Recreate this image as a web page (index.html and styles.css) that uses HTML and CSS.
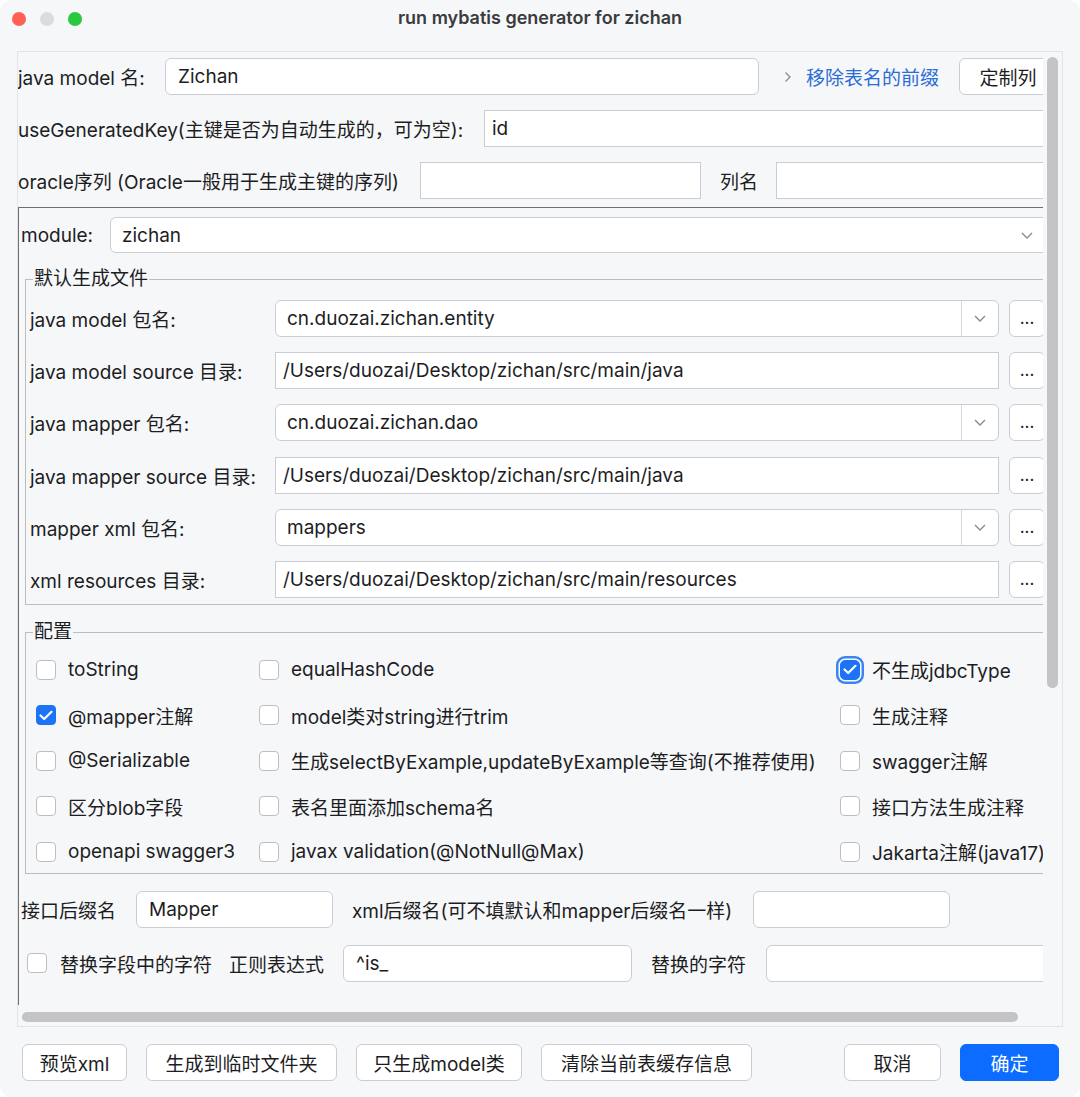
FILE: index.html
```html
<!DOCTYPE html>
<html lang="zh">
<head>
    <meta charset="UTF-8">
    <title>run mybatis generator for zichan</title>
    <link rel="stylesheet" href="styles.css">
</head>
<body>
<div class="window">
    <!-- Title bar -->
    <div class="titlebar">
        <div class="lights">
            <span class="light red"></span>
            <span class="light idle"></span>
            <span class="light green"></span>
        </div>
        <div class="title">run mybatis generator for zichan</div>
        <div></div>
    </div>

    <!-- Scroll pane -->
    <div class="pane">
        <div class="viewport">
            <div class="content">
                <div class="row">
                    <span class="lbl w-model">java model 名:</span>
                    <div class="field round w-594">Zichan</div>
                    <svg class="chev-right" width="8" height="12" viewBox="0 0 8 12"><polyline points="1.5,1.5 6,6 1.5,10.5" fill="none" stroke="#8e8e93" stroke-width="1.4"/></svg>
                    <a class="link">移除表名的前缀</a>
                    <button class="btn col-btn">定制列</button>
                </div>
                <div class="row">
                    <span class="lbl w-key">useGeneratedKey(主键是否为自动生成的，可为空):</span>
                    <div class="field grow">id</div>
                </div>
                <div class="row last">
                    <span class="lbl w-oracle">oracle序列 (Oracle一般用于生成主键的序列)</span>
                    <div class="field w-281"></div>
                    <span class="lbl gap-19">列名</span>
                    <div class="field grow gap-18"></div>
                </div>

                <div class="module">
                    <div class="row mod-row">
                        <span class="lbl w-module">module:</span>
                        <div class="combo grow">
                            <span class="combo-text">zichan</span>
                            <span class="combo-arrow plain">
                                <svg width="12" height="7" viewBox="0 0 12 7"><polyline points="1,1 6,6 11,1" fill="none" stroke="#8a8a90" stroke-width="1.4"/></svg>
                            </span>
                        </div>
                    </div>

                    <div class="group files">
                        <div class="legend">默认生成文件</div>
                        <div class="group-rows">
                            <div class="frow">
                                <span class="lbl w-path">java model 包名:</span>
                                <div class="combo w-724">
                                    <span class="combo-text">cn.duozai.zichan.entity</span>
                                    <span class="combo-arrow"><svg width="12" height="7" viewBox="0 0 12 7"><polyline points="1,1 6,6 11,1" fill="none" stroke="#8a8a90" stroke-width="1.4"/></svg></span>
                                </div>
                                <button class="btn dots">...</button>
                            </div>
                            <div class="frow">
                                <span class="lbl w-path">java model source 目录:</span>
                                <div class="field w-724">/Users/duozai/Desktop/zichan/src/main/java</div>
                                <button class="btn dots">...</button>
                            </div>
                            <div class="frow">
                                <span class="lbl w-path">java mapper 包名:</span>
                                <div class="combo w-724">
                                    <span class="combo-text">cn.duozai.zichan.dao</span>
                                    <span class="combo-arrow"><svg width="12" height="7" viewBox="0 0 12 7"><polyline points="1,1 6,6 11,1" fill="none" stroke="#8a8a90" stroke-width="1.4"/></svg></span>
                                </div>
                                <button class="btn dots">...</button>
                            </div>
                            <div class="frow">
                                <span class="lbl w-path">java mapper source 目录:</span>
                                <div class="field w-724">/Users/duozai/Desktop/zichan/src/main/java</div>
                                <button class="btn dots">...</button>
                            </div>
                            <div class="frow">
                                <span class="lbl w-path">mapper xml 包名:</span>
                                <div class="combo w-724">
                                    <span class="combo-text">mappers</span>
                                    <span class="combo-arrow"><svg width="12" height="7" viewBox="0 0 12 7"><polyline points="1,1 6,6 11,1" fill="none" stroke="#8a8a90" stroke-width="1.4"/></svg></span>
                                </div>
                                <button class="btn dots">...</button>
                            </div>
                            <div class="frow">
                                <span class="lbl w-path">xml resources 目录:</span>
                                <div class="field w-724">/Users/duozai/Desktop/zichan/src/main/resources</div>
                                <button class="btn dots">...</button>
                            </div>
                        </div>
                    </div>

                    <div class="group config">
                        <div class="legend">配置</div>
                        <div class="checks">
                            <div class="check"><span class="box"></span>toString</div>
                            <div class="check"><span class="box"></span>equalHashCode</div>
                            <div class="check"><span class="box on focus"><svg width="14" height="11" viewBox="0 0 14 11"><polyline points="1.5,5.5 5.2,9 12.5,1.8" fill="none" stroke="#fff" stroke-width="2.2" stroke-linecap="round" stroke-linejoin="round"/></svg></span>不生成jdbcType</div>

                            <div class="check"><span class="box on"><svg width="14" height="11" viewBox="0 0 14 11"><polyline points="1.5,5.5 5.2,9 12.5,1.8" fill="none" stroke="#fff" stroke-width="2.2" stroke-linecap="round" stroke-linejoin="round"/></svg></span>@mapper注解</div>
                            <div class="check"><span class="box"></span>model类对string进行trim</div>
                            <div class="check"><span class="box"></span>生成注释</div>

                            <div class="check"><span class="box"></span>@Serializable</div>
                            <div class="check"><span class="box"></span>生成selectByExample,updateByExample等查询(不推荐使用)</div>
                            <div class="check"><span class="box"></span>swagger注解</div>

                            <div class="check"><span class="box"></span>区分blob字段</div>
                            <div class="check"><span class="box"></span>表名里面添加schema名</div>
                            <div class="check"><span class="box"></span>接口方法生成注释</div>

                            <div class="check"><span class="box"></span>openapi swagger3</div>
                            <div class="check"><span class="box"></span>javax validation(@NotNull@Max)</div>
                            <div class="check"><span class="box"></span>Jakarta注解(java17)</div>
                        </div>
                    </div>

                    <div class="row suffix-row">
                        <span class="lbl w-suffix">接口后缀名</span>
                        <div class="field round w-197">Mapper</div>
                        <span class="lbl w-xml gap-19">xml后缀名(可不填默认和mapper后缀名一样)</span>
                        <div class="field round w-197"></div>
                    </div>
                    <div class="row replace-row">
                        <span class="box replace-box"></span>
                        <span class="lbl w-replace">替换字段中的字符</span>
                        <span class="lbl w-regex">正则表达式</span>
                        <div class="field round w-289">^is_</div>
                        <span class="lbl w-target">替换的字符</span>
                        <div class="field round grow"></div>
                    </div>
                </div>
            </div>
        </div>
        <div class="vbar"><div class="vthumb"></div></div>
        <div class="hbar"><div class="hthumb"></div></div>
        <div class="corner"></div>
    </div>

    <!-- Footer buttons -->
    <div class="footer">
        <button class="btn b-preview">预览xml</button>
        <button class="btn b-temp">生成到临时文件夹</button>
        <button class="btn b-model">只生成model类</button>
        <button class="btn b-clear">清除当前表缓存信息</button>
        <span class="spacer"></span>
        <button class="btn b-cancel">取消</button>
        <button class="btn primary b-ok">确定</button>
    </div>
</div>
</body>
</html>
```

FILE: styles.css
```css
* {
    box-sizing: border-box;
}

body {
    margin: 0;
    background: #ffffff;
    font-family: Inter, "Noto Sans CJK SC", sans-serif;
    font-size: 19px;
    color: #1d1d1f;
}

.window {
    width: 1080px;
    height: 1097px;
    background: #f6f7f9;
    border-radius: 12px;
    overflow: hidden;
    display: flex;
    flex-direction: column;
}

/* Title bar */
.titlebar {
    height: 51px;
    display: grid;
    grid-template-columns: 1fr auto 1fr;
    align-items: start;
}

.lights {
    display: flex;
    gap: 14px;
    padding: 12px 0 0 12px;
}

.light {
    width: 14px;
    height: 14px;
    border-radius: 50%;
}

.light.red { background: #fe5f57; }
.light.idle { background: #dcdcde; }
.light.green { background: #28c840; }

.title {
    padding-top: 8px;
    line-height: 20px;
    font-size: 18px;
    font-weight: 600;
    color: #3b3b3d;
}

/* Scroll pane */
.pane {
    margin: 0 17px;
    width: 1046px;
    height: 976px;
    border: 1px solid #e3e4e8;
    display: grid;
    grid-template-columns: 1025px 19px;
    grid-template-rows: 953px 21px;
}

.viewport {
    overflow: hidden;
}

.content {
    width: 1030px;
    padding-top: 6px;
}

.vthumb {
    margin: 5px 0 0 4px;
    width: 11px;
    height: 631px;
    border-radius: 6px;
    background: #c4c4c6;
}

.hthumb {
    margin: 7px 0 0 4px;
    width: 996px;
    height: 10px;
    border-radius: 5px;
    background: #c4c4c6;
}

/* Rows and fields */
.row {
    display: flex;
    align-items: center;
    height: 37px;
    margin-bottom: 15px;
}

.row.last {
    margin-bottom: 0;
}

.lbl {
    flex-shrink: 0;
    white-space: nowrap;
}

.w-model { width: 147px; }
.w-key { width: 466px; }
.w-oracle { width: 402px; }
.w-module { width: 89px; }
.w-path { width: 245px; }
.w-suffix { width: 115px; }
.w-xml { width: 401px; }
.w-replace { width: 169px; }
.w-regex { width: 114px; }
.w-target { width: 115px; margin-left: 19px; }

.w-594 { width: 594px; }
.w-281 { width: 281px; }
.w-724 { width: 724px; }
.w-197 { width: 197px; }
.w-289 { width: 289px; }

.gap-19 { margin-left: 19px; }
.gap-18 { margin-left: 18px; }

.grow {
    flex: 1;
}

.field {
    flex-shrink: 0;
    height: 37px;
    line-height: 35px;
    padding: 0 7px;
    background: #ffffff;
    border: 1px solid #cbccd6;
    white-space: nowrap;
    overflow: hidden;
}

.field.grow {
    flex: 1;
}

.field.round {
    border-radius: 6px;
    padding: 0 12px;
}

.combo {
    flex-shrink: 0;
    display: flex;
    height: 37px;
    background: #ffffff;
    border: 1px solid #cbccd6;
    border-radius: 6px;
}

.combo.grow {
    flex: 1;
}

.combo-text {
    flex: 1;
    line-height: 35px;
    padding-left: 11px;
    white-space: nowrap;
}

.combo-arrow {
    width: 37px;
    border-left: 1px solid #d6d7df;
    display: flex;
    align-items: center;
    justify-content: center;
}

.combo-arrow.plain {
    width: 26px;
    border-left: none;
    justify-content: flex-start;
}

.chev-right {
    margin-left: 25px;
    flex-shrink: 0;
}

.link {
    margin-left: 14px;
    color: #2b6dd6;
    white-space: nowrap;
}

.btn {
    height: 37px;
    padding: 0;
    background: #ffffff;
    border: 1px solid #cbccd6;
    border-radius: 6px;
    font-family: inherit;
    font-size: 19px;
    color: #1d1d1f;
    flex-shrink: 0;
}

.col-btn {
    width: 98px;
    margin-left: 20px;
}

.dots {
    width: 36px;
    margin-left: 10px;
    font-size: 17px;
    line-height: 1;
}

/* Module pane */
.module {
    margin-top: 8px;
    border-top: 1px solid #6f6f72;
    border-left: 1px solid #6f6f72;
    padding: 9px 0 40px 2px;
}

.mod-row {
    height: 36px;
    margin-bottom: 0;
}

.mod-row .combo {
    height: 36px;
}

.group {
    margin-left: 4px;
    border: 1px solid #bdbdc1;
}

.group.files {
    margin-top: 26px;
    padding-bottom: 6px;
}

.group.config {
    margin-top: 27px;
    padding-bottom: 6px;
}

.legend {
    width: fit-content;
    height: 22px;
    line-height: 22px;
    margin: -12px 0 0 7px;
    padding: 0 1px;
    background: #f6f7f9;
}

.group-rows {
    margin-top: 10px;
    padding-left: 4px;
    display: flex;
    flex-direction: column;
    gap: 15.2px;
}

.frow {
    display: flex;
    align-items: center;
    height: 37px;
}

/* Checkboxes */
.checks {
    margin-top: 12px;
    padding-left: 10px;
    display: grid;
    grid-template-columns: 223px 581px auto;
    grid-auto-rows: 30px;
    row-gap: 15.5px;
}

.check {
    display: flex;
    align-items: center;
    gap: 12px;
    white-space: nowrap;
}

.box {
    flex-shrink: 0;
    width: 20px;
    height: 20px;
    border: 1px solid #bdbdc3;
    border-radius: 4px;
    background: #ffffff;
    display: inline-flex;
    align-items: center;
    justify-content: center;
}

.box.on {
    background: #1b74f5;
    border-color: #1b74f5;
}

.box.focus {
    box-shadow: 0 0 0 1.5px #ffffff, 0 0 0 4px #3b84f3;
    border-radius: 5px;
}

.suffix-row {
    margin-top: 17px;
    margin-bottom: 0;
}

.replace-row {
    margin-top: 17px;
    margin-bottom: 0;
}

.replace-box {
    margin: 0 13px 0 6px;
}

/* Footer */
.footer {
    margin-top: 17px;
    padding: 0 21px 0 22px;
    display: flex;
    align-items: center;
}

.footer .btn + .btn {
    margin-left: 19px;
}

.spacer {
    flex: 1;
}

.b-preview { width: 105px; }
.b-temp { width: 191px; }
.b-model { width: 166px; }
.footer .b-clear { width: 211px; margin-left: 20px; }
.b-cancel { width: 97px; }
.footer .b-ok { width: 99px; margin-left: 18px; }

.btn.primary {
    background: #0b6cff;
    border-color: #0b6cff;
    color: #ffffff;
}
```
